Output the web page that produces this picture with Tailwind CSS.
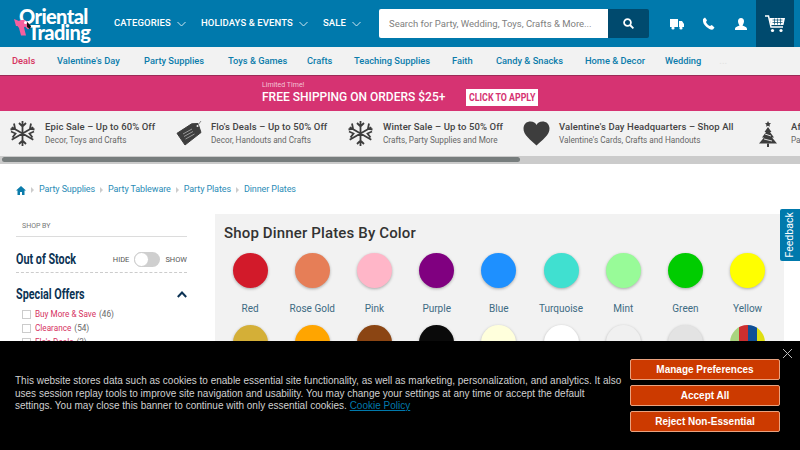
<!DOCTYPE html>
<html lang="en">
<head>
    <meta charset="UTF-8">
    <meta name="viewport" content="width=device-width, initial-scale=1.0">
    <title>Dinner Plates</title>
    <script src="https://cdn.jsdelivr.net/npm/@tailwindcss/browser@4"></script>
</head>
<body class="relative w-[800px] h-[450px] overflow-hidden bg-white font-['Roboto',sans-serif]">

    <!-- top header -->
    <header class="h-[47px] bg-[#0079ac] flex items-center text-white">
        <div class="relative w-[114px] h-[47px] shrink-0 font-['Lato',sans-serif] font-black">
            <span class="absolute left-[19px] top-[8px] text-[20px] leading-[16px] tracking-[-0.6px]">Oriental</span>
            <span class="absolute left-[28px] top-[24px] text-[20px] leading-[16px] tracking-[-0.6px]">Trading</span>
            <svg class="absolute left-[13px] top-[18px]" width="20" height="20" viewBox="0 0 20 20">
                <path d="M1 1l5 2c2-1.500 6-1.500 8 .5l4 5-3 3-3-3-1 1 2 8H8L6 10 4.500 8 3 8z" fill="#f4609f"/>
                <path d="M14 4l4 4-1 3-3-2z" fill="#111"/>
                <circle cx="12.500" cy="4.500" r="1.500" fill="#fff"/>
            </svg>
        </div>
        <nav class="flex items-center text-[9.500px] font-medium tracking-[0.1px] h-full whitespace-nowrap shrink-0">
            <a class="flex items-center gap-[6px] w-[87px]">CATEGORIES
                <svg class="shrink-0" width="9" height="6" viewBox="0 0 9 6" fill="none" stroke="#cfe6f0"><path d="M.5 1l4 4 4-4"/></svg></a>
            <a class="flex items-center gap-[6px] w-[122px]">HOLIDAYS &amp; EVENTS
                <svg class="shrink-0" width="9" height="6" viewBox="0 0 9 6" fill="none" stroke="#cfe6f0"><path d="M.5 1l4 4 4-4"/></svg></a>
            <a class="flex items-center gap-[6px] w-[56px]">SALE
                <svg class="shrink-0" width="9" height="6" viewBox="0 0 9 6" fill="none" stroke="#cfe6f0"><path d="M.5 1l4 4 4-4"/></svg></a>
        </nav>
        <div class="flex w-[270px] h-[29px] shrink-0 rounded-[2px] overflow-hidden">
            <div class="w-[229px] bg-white text-[#808080] text-[9.500px] leading-[29px] pl-[10px] whitespace-nowrap">Search for Party, Wedding, Toys, Crafts &amp; More...</div>
            <div class="flex-1 bg-[#004a6e] flex items-center justify-center">
                <svg width="11" height="11" viewBox="0 0 11 11" fill="none" stroke="#fff" stroke-width="1.800"><circle cx="4.500" cy="4.500" r="3.400"/><path d="M7 7l3.400 3.400"/></svg>
            </div>
        </div>
        <svg class="shrink-0 ml-[21px]" width="14" height="12" viewBox="0 0 14 12" fill="#fff"><path d="M0 1h8v8H0zM9 3h3l2 3v3H9z"/><circle cx="3" cy="10" r="1.600"/><circle cx="11" cy="10" r="1.600"/></svg>
        <svg class="shrink-0 ml-[18px]" width="13" height="13" viewBox="0 0 13 13" fill="#fff"><path d="M3 .5L1 2c-.6 3 1 6 3.500 8S9 13 11 12.500l1.500-2L9.800 8 8 9C6.500 8.500 4.500 6.500 4 5l1-1.800z"/></svg>
        <svg class="shrink-0 ml-[20px]" width="12" height="12" viewBox="0 0 12 12" fill="#fff"><path d="M6 0c2 0 3 1.500 3 3.200S8 6.500 7.500 7.500c1 .8 4.500 1.200 4.500 3.500V12H0v-1c0-2.300 3.500-2.700 4.500-3.500C4 6.500 3 5 3 3.200S4 0 6 0z"/></svg>
        <div class="shrink-0 ml-[9px] w-[38px] h-[47px] bg-[#004a6e] flex items-center justify-center">
            <svg width="21" height="18" viewBox="0 0 21 18" fill="none" stroke="#fff">
                <path d="M0 1h3.500L6 12h12" stroke-width="1.500"/>
                <path d="M4.500 3H20l-1.500 7H6z" fill="#fff" stroke="none"/>
                <path d="M7.500 5h10M7.500 7.500h10M9.500 3.500v6M12.500 3.500v6M15.500 3.500v6" stroke="#004a6e" stroke-width=".7"/>
                <circle cx="7.500" cy="15.500" r="1.600" fill="#fff" stroke="none"/><circle cx="16" cy="15.500" r="1.600" fill="#fff" stroke="none"/>
            </svg>
        </div>
    </header>

    <!-- category nav -->
    <nav class="h-[28px] bg-[#f2f2f2] flex items-center pl-[12px] text-[9.300px] font-medium text-[#0b7cab] whitespace-nowrap">
        <a class="w-[45px] text-[#d6325f]">Deals</a>
        <a class="w-[87px]">Valentine's Day</a>
        <a class="w-[84px]">Party Supplies</a>
        <a class="w-[79px]">Toys &amp; Games</a>
        <a class="w-[47px]">Crafts</a>
        <a class="w-[98px]">Teaching Supplies</a>
        <a class="w-[44px]">Faith</a>
        <a class="w-[89px]">Candy &amp; Snacks</a>
        <a class="w-[80px]">Home &amp; Decor</a>
        <a>Wedding</a>
        <span class="ml-[18px] text-[#e3e3e3]">...</span>
    </nav>

    <!-- promo banner -->
    <div class="h-[36px] bg-[#d63372] border-t border-[#9c2a56] flex items-center pl-[262px] text-white">
        <div class="w-[204px] -mt-[1px]">
            <div class="text-[7px] leading-[9px] text-[#f4c4d6]">Limited Time!</div>
            <div class="text-[12px] leading-[15px] font-medium whitespace-nowrap">FREE SHIPPING ON ORDERS $25+</div>
        </div>
        <div class="mt-[8px] w-[72px] h-[17px] bg-white text-[#d63372] text-[10.500px] font-bold leading-[17px] pl-[3px] whitespace-nowrap">
            <span class="inline-block origin-left scale-x-[0.84]">CLICK TO APPLY</span>
        </div>
    </div>

    <!-- deals strip -->
    <div class="relative h-[45px] bg-[#f2f2f2] overflow-hidden flex items-center whitespace-nowrap text-[#444]">
        <div class="flex items-center w-[166px] shrink-0 pl-[9px]">
            <svg class="shrink-0" width="27" height="27" viewBox="0 0 27 27" fill="none" stroke="#3d3d3d" stroke-width="1.800"><path d="M13.500 1v25M2.700 7.300l21.600 12.400M2.700 19.700l21.600-12.400M10 3l3.500 3.500L17 3M10 24l3.500-3.500L17 24M2 11.500l4.500 2-3 4M25 11.500l-4.500 2 3 4M5 3.500l1 5-4.500 1M22 3.500l-1 5 4.500 1"/></svg>
            <div class="ml-[9px]">
                <div class="text-[9.500px] leading-[14px] font-medium tracking-[0.1px]">Epic Sale – Up to 60% Off</div>
                <div class="text-[8.200px] leading-[13px] text-[#666]">Decor, Toys and Crafts</div>
            </div>
        </div>
        <div class="flex items-center w-[172px] shrink-0 pl-[10px]">
            <svg class="shrink-0" width="26" height="26" viewBox="0 0 26 26"><path d="M1 12.300L15.700 2.800 22 2.500 25 11.500 9 24z" fill="#3d3d3d" stroke="#3d3d3d" stroke-linejoin="round"/><path d="M22 4l3-4" stroke="#888" fill="none"/><circle cx="21.500" cy="5" r="1" fill="#f2f2f2"/><path d="M7 13l9-5M8 15.500l9-5M9.500 18l9-5" stroke="#999" stroke-width="1"/></svg>
            <div class="ml-[9px]">
                <div class="text-[9.500px] leading-[14px] font-medium tracking-[0.1px]">Flo's Deals – Up to 50% Off</div>
                <div class="text-[8.200px] leading-[13px] text-[#666]">Decor, Handouts and Crafts</div>
            </div>
        </div>
        <div class="flex items-center w-[176px] shrink-0 pl-[9px]">
            <svg class="shrink-0" width="27" height="27" viewBox="0 0 27 27" fill="none" stroke="#3d3d3d" stroke-width="1.800"><path d="M13.500 1v25M2.700 7.300l21.600 12.400M2.700 19.700l21.600-12.400M10 3l3.500 3.500L17 3M10 24l3.500-3.500L17 24M2 11.500l4.500 2-3 4M25 11.500l-4.500 2 3 4M5 3.500l1 5-4.500 1M22 3.500l-1 5 4.500 1"/></svg>
            <div class="ml-[9px]">
                <div class="text-[9.500px] leading-[14px] font-medium tracking-[0.1px]">Winter Sale – Up to 50% Off</div>
                <div class="text-[8.200px] leading-[13px] text-[#666]">Crafts, Party Supplies and More</div>
            </div>
        </div>
        <div class="flex items-center w-[245px] shrink-0 pl-[9px]">
            <svg class="shrink-0" width="27" height="25" viewBox="0 0 27 25" fill="#3d3d3d"><path d="M13.500 24.500C8 19 0 14 .5 7 1 2.500 4 .5 7.500.5c3 0 5 1.500 6 3.500 1-2 3-3.500 6-3.500 3.500 0 6.500 2 7 6.500.5 7-7.500 12-13 17.500z"/></svg>
            <div class="ml-[9px]">
                <div class="text-[9.500px] leading-[14px] font-medium tracking-[0.1px]">Valentine's Day Headquarters – Shop All</div>
                <div class="text-[8.200px] leading-[13px] text-[#666]">Valentine's Cards, Crafts and Handouts</div>
            </div>
        </div>
        <div class="flex items-center shrink-0">
            <svg class="shrink-0" width="18" height="26" viewBox="0 0 18 26" fill="#3d3d3d"><path d="M9 0l1 2 2 .3-1.500 1.400.4 2L9 4.800l-1.900.9.400-2L6 2.300 8 2zM9 6l3.500 5H11l4 5.500h-2l5 6H0l5-6H3L7 11H5.500z"/><path d="M8 22.500h2V26H8z"/><path d="M6 13l6 2M5 18l8 2" stroke="#ddd"/></svg>
            <div class="ml-[14px]">
                <div class="text-[9.500px] leading-[14px] font-medium tracking-[0.1px]">After Christmas</div>
                <div class="text-[8.200px] leading-[13px] text-[#666]">Party Supplies</div>
            </div>
        </div>
    </div>
    <div class="h-[8px] bg-[#cbcbcb] pt-[1px]">
        <div class="w-[518px] h-[5px] ml-[2px] rounded-full bg-[#777d7d]"></div>
    </div>

    <!-- breadcrumb -->
    <div class="flex items-center h-[20px] mt-[16px] pl-[16px] text-[9px] tracking-[-0.1px] text-[#2b8cb6]">
        <svg class="shrink-0" width="10" height="9" viewBox="0 0 10 9" fill="#0b7cab"><path d="M5 0l5 4.500H8.500V9H6V6H4v3H1.500V4.500H0z"/></svg>
        <span class="mx-[5px] border-y-[3px] border-l-[3px] border-y-transparent border-l-[#cccccc]"></span>
        <a>Party Supplies</a>
        <span class="mx-[5px] border-y-[3px] border-l-[3px] border-y-transparent border-l-[#cccccc]"></span>
        <a>Party Tableware</a>
        <span class="mx-[5px] border-y-[3px] border-l-[3px] border-y-transparent border-l-[#cccccc]"></span>
        <a>Party Plates</a>
        <span class="mx-[5px] border-y-[3px] border-l-[3px] border-y-transparent border-l-[#cccccc]"></span>
        <a>Dinner Plates</a>
    </div>

    <!-- main -->
    <div class="flex mt-[14px] pl-[16px]">
        <aside class="w-[171px] shrink-0">
            <div class="h-[23px] pl-[6px] pt-[6px] border-b border-[#dcdcdc] text-[7px] leading-[12px] text-[#777]">SHOP BY</div>
            <div class="flex items-center h-[36px] pt-[10px] border-b border-dashed border-[#cccccc]">
                <span class="inline-block origin-left scale-x-[0.77] font-bold text-[14px] text-[#0c3354] whitespace-nowrap">Out of Stock</span>
                <span class="ml-auto text-[7.500px] text-[#555]">HIDE</span>
                <span class="relative mx-[5px] w-[26px] h-[15px] rounded-full bg-[#cfcfcf]">
                    <span class="absolute left-0 top-0 w-[15px] h-[15px] rounded-full bg-white border border-[#cccccc]"></span>
                </span>
                <span class="text-[7.500px] text-[#555]">SHOW</span>
            </div>
            <div class="flex items-center justify-between h-[27px] mt-[8px]">
                <span class="inline-block origin-left scale-x-[0.77] font-bold text-[14px] text-[#0c3354] whitespace-nowrap">Special Offers</span>
                <svg class="shrink-0" width="10" height="7" viewBox="0 0 10 7" fill="none" stroke="#0c3354" stroke-width="2"><path d="M.8 6L5 1.500 9.200 6"/></svg>
            </div>
            <ul class="pl-[6px] -mt-[1px] text-[8.200px] leading-[14px] text-[#d6325f]">
                <li class="flex items-center"><span class="w-[9px] h-[9px] mr-[4px] border border-[#cccccc] bg-white"></span>Buy More &amp; Save <span class="ml-[3px] text-[#666]">(46)</span></li>
                <li class="flex items-center"><span class="w-[9px] h-[9px] mr-[4px] border border-[#cccccc] bg-white"></span>Clearance <span class="ml-[3px] text-[#666]">(54)</span></li>
                <li class="flex items-center"><span class="w-[9px] h-[9px] mr-[4px] border border-[#cccccc] bg-white"></span>Flo's Deals <span class="ml-[3px] text-[#666]">(3)</span></li>
            </ul>
        </aside>

        <section class="ml-[28px] w-[569px] h-[200px] bg-[#f2f2f2] pl-[4px]">
            <h2 class="pl-[5px] pt-[9px] h-[39px] text-[15px] leading-[21px] font-medium text-[#333] tracking-[0.15px]">Shop Dinner Plates By Color</h2>
            <div class="grid grid-cols-[repeat(9,62.2px)] text-center text-[10px] text-[#3d6b82]">
                <div class="h-[72px]"><div class="mx-auto w-[35px] h-[35px] rounded-full bg-[#d21a2a] shadow-[0_1px_3px_rgba(0,0,0,0.3)]"></div><div class="mt-[13px]">Red</div></div>
                <div><div class="mx-auto w-[35px] h-[35px] rounded-full bg-[#e67e57] shadow-[0_1px_3px_rgba(0,0,0,0.3)]"></div><div class="mt-[13px]">Rose Gold</div></div>
                <div><div class="mx-auto w-[35px] h-[35px] rounded-full bg-[#ffb6c8] shadow-[0_1px_3px_rgba(0,0,0,0.3)]"></div><div class="mt-[13px]">Pink</div></div>
                <div><div class="mx-auto w-[35px] h-[35px] rounded-full bg-[#800080] shadow-[0_1px_3px_rgba(0,0,0,0.3)]"></div><div class="mt-[13px]">Purple</div></div>
                <div><div class="mx-auto w-[35px] h-[35px] rounded-full bg-[#1e90ff] shadow-[0_1px_3px_rgba(0,0,0,0.3)]"></div><div class="mt-[13px]">Blue</div></div>
                <div><div class="mx-auto w-[35px] h-[35px] rounded-full bg-[#40e0d0] shadow-[0_1px_3px_rgba(0,0,0,0.3)]"></div><div class="mt-[13px]">Turquoise</div></div>
                <div><div class="mx-auto w-[35px] h-[35px] rounded-full bg-[#98fb98] shadow-[0_1px_3px_rgba(0,0,0,0.3)]"></div><div class="mt-[13px]">Mint</div></div>
                <div><div class="mx-auto w-[35px] h-[35px] rounded-full bg-[#00cc00] shadow-[0_1px_3px_rgba(0,0,0,0.3)]"></div><div class="mt-[13px]">Green</div></div>
                <div><div class="mx-auto w-[35px] h-[35px] rounded-full bg-[#ffff00] shadow-[0_1px_3px_rgba(0,0,0,0.3)]"></div><div class="mt-[13px]">Yellow</div></div>
                <div><div class="mx-auto w-[35px] h-[35px] rounded-full bg-[#d4af37] shadow-[0_1px_3px_rgba(0,0,0,0.3)]"></div></div>
                <div><div class="mx-auto w-[35px] h-[35px] rounded-full bg-[#ffa500] shadow-[0_1px_3px_rgba(0,0,0,0.3)]"></div></div>
                <div><div class="mx-auto w-[35px] h-[35px] rounded-full bg-[#8b4513] shadow-[0_1px_3px_rgba(0,0,0,0.3)]"></div></div>
                <div><div class="mx-auto w-[35px] h-[35px] rounded-full bg-[#0a0a0a] shadow-[0_1px_3px_rgba(0,0,0,0.3)]"></div></div>
                <div><div class="mx-auto w-[35px] h-[35px] rounded-full bg-[#ffffdc] shadow-[0_1px_3px_rgba(0,0,0,0.3)]"></div></div>
                <div><div class="mx-auto w-[35px] h-[35px] rounded-full bg-white shadow-[0_1px_3px_rgba(0,0,0,0.3)]"></div></div>
                <div><div class="mx-auto w-[35px] h-[35px] rounded-full bg-[#f0f0f0] shadow-[0_1px_3px_rgba(0,0,0,0.3)]"></div></div>
                <div><div class="mx-auto w-[35px] h-[35px] rounded-full bg-[#e3e3e3] shadow-[0_1px_3px_rgba(0,0,0,0.3)]"></div></div>
                <div><div class="mx-auto w-[35px] h-[35px] rounded-full overflow-hidden flex"><span class="w-[9px] bg-[#a9d47f]"></span><span class="w-[9px] bg-[#cc2f2f]"></span><span class="w-[9px] bg-[#0f4f96]"></span><span class="w-[8px] bg-[#dfdf10]"></span></div></div>
            </div>
        </section>
    </div>

    <!-- feedback tab -->
    <div class="absolute right-0 top-[209px] w-[20px] h-[52px] bg-[#0079ac] rounded-l-[2px] flex items-center justify-center">
        <span class="-rotate-90 shrink-0 whitespace-nowrap text-white text-[10.500px]">Feedback</span>
    </div>

    <!-- cookie banner -->
    <div class="absolute left-0 bottom-0 w-full h-[109px] bg-black flex font-['Liberation_Sans',sans-serif]">
        <p class="w-[608px] ml-[15px] mr-[7px] mt-[34px] text-[10px] leading-[12.600px] text-[#d0d0d0]">This website stores data such as cookies to enable essential site functionality, as well as marketing, personalization, and analytics. It also uses session replay tools to improve site navigation and usability. You may change your settings at any time or accept the default settings. You may close this banner to continue with only essential cookies. <a class="text-[#0079ac] underline">Cookie Policy</a></p>
        <div class="mt-[18px] w-[150px] flex flex-col gap-[5px] text-white font-bold text-[10px]">
            <button class="h-[21px] bg-[#cc3a00] border border-[#e9a27f] rounded-[2px]">Manage Preferences</button>
            <button class="h-[21px] bg-[#cc3a00] border border-[#e9a27f] rounded-[2px]">Accept All</button>
            <button class="h-[21px] bg-[#cc3a00] border border-[#e9a27f] rounded-[2px]">Reject Non-Essential</button>
        </div>
        <svg class="absolute left-[783px] top-[8px]" width="9" height="9" viewBox="0 0 9 9" stroke="#bbb" fill="none"><path d="M0 0l9 9M9 0L0 9"/></svg>
    </div>
</body>
</html>
